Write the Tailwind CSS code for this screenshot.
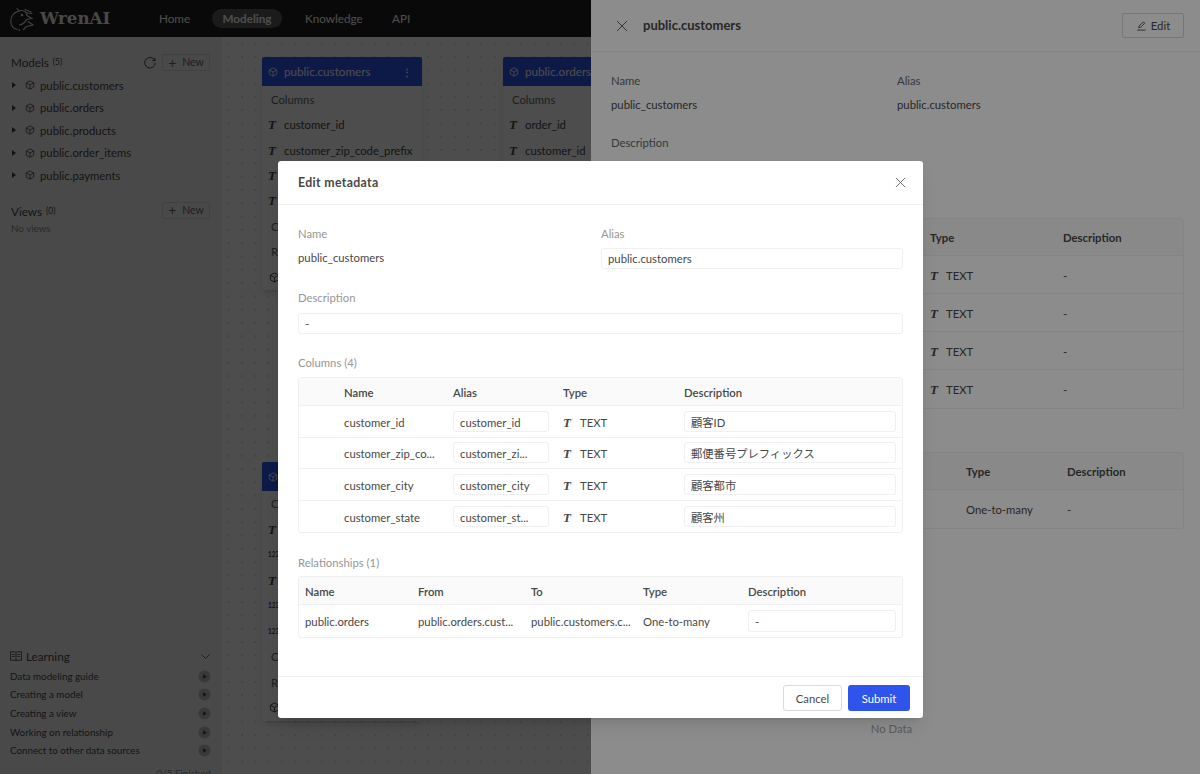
<!DOCTYPE html>
<html lang="en">
<head>
    <meta charset="UTF-8">
    <title>WrenAI - Modeling</title>
    <script src="https://cdn.jsdelivr.net/npm/@tailwindcss/browser@4"></script>
</head>
<body class="w-[1200px] h-[774px] overflow-hidden relative bg-white text-[11.3px] leading-[19px] text-[#484848] [font-family:'Lato','Noto_Sans_CJK_JP',sans-serif]">
    <svg class="hidden">
        <symbol id="cube" viewBox="0 0 24 24"><path d="M12 2 21 7v10l-9 5-9-5V7zM3 7l9 5 9-5M12 12v10" fill="none" stroke="currentColor" stroke-width="2" stroke-linejoin="round"/></symbol>
        <symbol id="close" viewBox="0 0 12 12"><path d="M1 1l10 10M11 1 1 11" stroke="currentColor" stroke-width="1" fill="none"/></symbol>
        <symbol id="play" viewBox="0 0 14 14"><circle cx="7" cy="7" r="6.5" fill="#bfbfbf"/><path d="M5.5 4.500 9.500 7l-4 2.500z" fill="#434343"/></symbol>
    </svg>

    <!-- app under the masks -->
    <div class="flex flex-col h-full">
        <header class="h-[37px] shrink-0 bg-[#1f1f1f] flex items-center text-white">
            <svg class="w-[24px] h-[24px] ml-[10px] text-[#e0e0e0]" viewBox="0 0 24 24" fill="none" stroke="currentColor" stroke-width="1.1" stroke-linecap="round"><path d="M7 1.5 9 4C4 5.500 .8 9 .8 14c0 4 2.500 7.500 6.200 8.500"/><path d="M9 4c2.500-.8 5-.5 6.500 1 1 1 1 2.500 1.500 3.500l5 3-5.500 1c-1.500 3-4 5-7 5.500"/><path d="M15 2.500 21 5M17 6l5 .5M18 14.500l5 3.500-6.500 1.500-3 3M9 22.500l.5 1.300"/><circle cx="12" cy="8" r=".7" fill="currentColor"/></svg>
            <span class="ml-[6px] w-[119px] [font-family:'DejaVu_Serif',serif] font-bold text-[16.700px] text-[#f0f0f0]">WrenAI</span>
            <span class="w-[53px] text-[11.7px]">Home</span>
            <span class="w-[70px] h-[19px] rounded-full bg-[#5c5c5c] flex items-center justify-center font-bold text-[11.7px]">Modeling</span>
            <span class="ml-[23px] w-[87px] text-[11.7px]">Knowledge</span>
            <span class="text-[11.7px]">API</span>
        </header>
        <div class="flex flex-1 min-h-0">
            <aside class="w-[222px] shrink-0 bg-[#f5f5f5] flex flex-col overflow-hidden">
                <div class="h-[17px] mt-[17px] ml-[11px] mr-[12px] flex items-center">
                    <span class="text-[11.7px]">Models</span><span class="text-[8.5px] ml-[4px]">(5)</span>
                    <svg class="w-[12px] h-[12px] ml-auto mr-[6px]" viewBox="0 0 12 12" fill="none" stroke="currentColor"><path d="M10.800 3.500A5.300 5.300 0 1 0 11.300 6M11 1v2.700H8.300"/></svg>
                    <span class="w-[48px] h-[17px] border border-[#d9d9d9] rounded-[2px] flex items-center justify-center gap-[6px] text-[10.5px] text-[#65676c]"><b class="font-normal text-[14px] leading-none">+</b>New</span>
                </div>
                <div class="mt-[3px]">
                    <div class="h-[22.5px] flex items-center pl-[12px]"><span class="w-0 h-0 border-y-[3.500px] border-y-transparent border-l-[4px] border-l-[#434343]"></span><svg class="w-[10px] h-[10px] ml-[9px]"><use href="#cube"/></svg><span class="ml-[5px]">public.customers</span></div>
                    <div class="h-[22.5px] flex items-center pl-[12px]"><span class="w-0 h-0 border-y-[3.500px] border-y-transparent border-l-[4px] border-l-[#434343]"></span><svg class="w-[10px] h-[10px] ml-[9px]"><use href="#cube"/></svg><span class="ml-[5px]">public.orders</span></div>
                    <div class="h-[22.5px] flex items-center pl-[12px]"><span class="w-0 h-0 border-y-[3.500px] border-y-transparent border-l-[4px] border-l-[#434343]"></span><svg class="w-[10px] h-[10px] ml-[9px]"><use href="#cube"/></svg><span class="ml-[5px]">public.products</span></div>
                    <div class="h-[22.5px] flex items-center pl-[12px]"><span class="w-0 h-0 border-y-[3.500px] border-y-transparent border-l-[4px] border-l-[#434343]"></span><svg class="w-[10px] h-[10px] ml-[9px]"><use href="#cube"/></svg><span class="ml-[5px]">public.order_items</span></div>
                    <div class="h-[22.5px] flex items-center pl-[12px]"><span class="w-0 h-0 border-y-[3.500px] border-y-transparent border-l-[4px] border-l-[#434343]"></span><svg class="w-[10px] h-[10px] ml-[9px]"><use href="#cube"/></svg><span class="ml-[5px]">public.payments</span></div>
                </div>
                <div class="h-[17px] mt-[15px] ml-[11px] mr-[12px] flex items-center">
                    <span class="text-[11.7px] pt-[3px]">Views</span><span class="text-[8.5px] ml-[4px] pt-[3px]">(0)</span>
                    <span class="ml-auto w-[48px] h-[17px] border border-[#d9d9d9] rounded-[2px] flex items-center justify-center gap-[6px] text-[10.5px] text-[#65676c]"><b class="font-normal text-[14px] leading-none">+</b>New</span>
                </div>
                <div class="ml-[11px] text-[9.8px] text-[#8c8c8c]">No views</div>

                <div class="mt-auto h-[132px] shrink-0 border-t border-[#ececec] overflow-hidden pl-[10px] pr-[11px] text-[9.8px]">
                    <div class="h-[26px] flex items-center text-[11.7px]">
                        <svg class="w-[12px] h-[10px] mr-[4px]" viewBox="0 0 12 10" fill="none" stroke="currentColor" stroke-width=".9"><path d="M.5.800h4.500L6 1.500 7 .8h4.500v8.400H7L6 9.500 5 9.200H.5zM6 1.500v8M2 3.500h2.500M2 5.500h2.500M7.500 3.500H10M7.500 5.500H10"/></svg>
                        Learning
                        <svg class="w-[9px] h-[5px] ml-auto mr-[1px]" viewBox="0 0 9 5" fill="none" stroke="currentColor" stroke-width=".8"><path d="M.5.500l4 4 4-4"/></svg>
                    </div>
                    <div class="h-[18.6px] flex items-center justify-between mt-[-2px]">Data modeling guide<svg class="w-[13px] h-[13px]"><use href="#play"/></svg></div>
                    <div class="h-[18.6px] flex items-center justify-between">Creating a model<svg class="w-[13px] h-[13px]"><use href="#play"/></svg></div>
                    <div class="h-[18.6px] flex items-center justify-between">Creating a view<svg class="w-[13px] h-[13px]"><use href="#play"/></svg></div>
                    <div class="h-[18.6px] flex items-center justify-between">Working on relationship<svg class="w-[13px] h-[13px]"><use href="#play"/></svg></div>
                    <div class="h-[18.6px] flex items-center justify-between">Connect to other data sources<svg class="w-[13px] h-[13px]"><use href="#play"/></svg></div>
                    <div class="mt-[4px] text-right text-[#8c8c8c]">0/5 Finished</div>
                </div>
            </aside>

            <!-- diagram canvas -->
            <main class="relative flex-1 bg-white bg-[radial-gradient(#cfcfcf_0.6px,transparent_0.8px)] bg-[length:13.3px_13.3px]">
                <div class="absolute left-[40px] top-[20px] w-[160px] bg-white rounded-[2px] shadow-md whitespace-nowrap">
                    <div class="h-[29px] bg-[#2f54eb] rounded-t-[2px] text-white flex items-center pl-[6px] pr-[10px] text-[11.7px]"><svg class="w-[10px] h-[10px] mr-[6px]"><use href="#cube"/></svg>public.customers<span class="ml-auto leading-none font-bold text-[10px]">⋮</span></div>
                    <div class="h-[25.5px] flex items-center px-[9px] pt-[2px] text-[#65676c]">Columns</div>
                    <div class="h-[25.5px] flex items-center px-[6px]"><i class="w-[16px] shrink-0 [font-family:'Liberation_Serif',serif] font-bold text-[13px]">T</i>customer_id</div>
                    <div class="h-[25.5px] flex items-center px-[6px] pt-[1px]"><i class="w-[16px] shrink-0 [font-family:'Liberation_Serif',serif] font-bold text-[13px]">T</i>customer_zip_code_prefix</div>
                    <div class="h-[25.5px] flex items-center px-[6px]"><i class="w-[16px] shrink-0 [font-family:'Liberation_Serif',serif] font-bold text-[13px]">T</i>customer_city</div>
                    <div class="h-[25.5px] flex items-center px-[6px]"><i class="w-[16px] shrink-0 [font-family:'Liberation_Serif',serif] font-bold text-[13px]">T</i>customer_state</div>
                    <div class="h-[25.5px] flex items-center px-[9px] text-[#65676c]">Calculated Fields</div>
                    <div class="h-[25.5px] flex items-center px-[9px] text-[#65676c]">Relationships</div>
                    <div class="h-[25.5px] flex items-center px-[7px]"><svg class="w-[11px] h-[11px] mr-[4px]"><use href="#cube"/></svg>public.orders</div>
                </div>
                <div class="absolute left-[281px] top-[20px] w-[160px] bg-white rounded-[2px] shadow-md whitespace-nowrap">
                    <div class="h-[29px] bg-[#2f54eb] rounded-t-[2px] text-white flex items-center pl-[6px] pr-[10px] text-[11.7px]"><svg class="w-[10px] h-[10px] mr-[6px]"><use href="#cube"/></svg>public.orders</div>
                    <div class="h-[25.5px] flex items-center px-[9px] pt-[2px] text-[#65676c]">Columns</div>
                    <div class="h-[25.5px] flex items-center px-[6px]"><i class="w-[16px] shrink-0 [font-family:'Liberation_Serif',serif] font-bold text-[13px]">T</i>order_id</div>
                    <div class="h-[25.5px] flex items-center px-[6px] pt-[1px]"><i class="w-[16px] shrink-0 [font-family:'Liberation_Serif',serif] font-bold text-[13px]">T</i>customer_id</div>
                </div>
                <div class="absolute left-[40px] top-[425px] w-[160px] bg-white rounded-[2px] shadow-md whitespace-nowrap">
                    <div class="h-[29px] bg-[#2f54eb] rounded-t-[2px] text-white flex items-center pl-[6px] pr-[10px] text-[11.7px]"><svg class="w-[10px] h-[10px] mr-[6px]"><use href="#cube"/></svg>public.payments</div>
                    <div class="h-[25.5px] flex items-center px-[9px] text-[#65676c]">Columns</div>
                    <div class="h-[25.5px] flex items-center px-[6px]"><i class="w-[16px] shrink-0 [font-family:'Liberation_Serif',serif] font-bold text-[13px]">T</i>order_id</div>
                    <div class="h-[25.5px] flex items-center px-[6px]"><b class="w-[16px] shrink-0 text-[6.500px]">123</b>payment_sequential</div>
                    <div class="h-[25.5px] flex items-center px-[6px]"><i class="w-[16px] shrink-0 [font-family:'Liberation_Serif',serif] font-bold text-[13px]">T</i>payment_type</div>
                    <div class="h-[25.5px] flex items-center px-[6px]"><b class="w-[16px] shrink-0 text-[6.500px]">123</b>payment_installments</div>
                    <div class="h-[25.5px] flex items-center px-[6px]"><b class="w-[16px] shrink-0 text-[6.500px]">123</b>payment_value</div>
                    <div class="h-[25.5px] flex items-center px-[9px] text-[#65676c]">Calculated Fields</div>
                    <div class="h-[25.5px] flex items-center px-[9px] text-[#65676c]">Relationships</div>
                    <div class="h-[25.5px] flex items-center px-[7px]"><svg class="w-[11px] h-[11px] mr-[4px]"><use href="#cube"/></svg>public.orders</div>
                </div>
            </main>
        </div>
    </div>

    <div class="absolute inset-0 bg-black/45"></div>

    <!-- drawer -->
    <section class="absolute right-0 top-0 w-[609px] h-full bg-white">
        <div class="h-[52px] border-b border-[#f0f0f0] flex items-center pl-[25px] pr-[16px]">
            <svg class="w-[12px] h-[12px] text-[#65676c]"><use href="#close"/></svg>
            <span class="ml-[15px] font-bold text-[13px]">public.customers</span>
            <span class="ml-auto w-[62px] h-[25px] border border-[#d9d9d9] rounded-[2px] flex items-center justify-center gap-[4px]">
                <svg class="w-[11px] h-[11px]" viewBox="0 0 12 12" fill="none" stroke="currentColor"><path d="M3 8.500 3.500 6.500 8 2l1.500 1.500L5 8zM1.500 11h9"/></svg>Edit
            </span>
        </div>
        <div class="pl-[20px] pr-[16px] pt-[19px]">
            <div class="grid grid-cols-[286px_1fr]">
                <div class="h-[18px] text-[#65676c]">Name</div><div class="h-[18px] text-[#65676c]">Alias</div>
                <div class="h-[18px] mt-[6px]">public_customers</div><div class="h-[18px] mt-[6px]">public.customers</div>
            </div>
            <div class="h-[18px] mt-[20px] text-[#65676c]">Description</div>
            <div class="h-[18px] mt-[6px]">-</div>
            <div class="h-[18px] mt-[15px] text-[#65676c]">Columns (4)</div>
            <div class="mt-[10px] border border-[#f0f0f0] rounded-[3px]">
                <div class="h-[37px] bg-[#fafafa] grid grid-cols-[155px_156px_133px_1fr] items-center px-[7px] font-bold border-b border-[#f0f0f0]"><span>Name</span><span>Alias</span><span>Type</span><span>Description</span></div>
                <div class="h-[38px] grid grid-cols-[155px_156px_133px_1fr] items-center px-[7px] border-b border-[#f0f0f0] [&>span]:pt-[2px]"><span>customer_id</span><span>customer_id</span><span class="flex items-center"><i class="w-[16px] [font-family:'Liberation_Serif',serif] font-bold text-[13px]">T</i>TEXT</span><span>-</span></div>
                <div class="h-[38px] grid grid-cols-[155px_156px_133px_1fr] items-center px-[7px] border-b border-[#f0f0f0] [&>span]:pt-[2px]"><span>customer_zip_code_prefix</span><span>customer_zip_code_prefix</span><span class="flex items-center"><i class="w-[16px] [font-family:'Liberation_Serif',serif] font-bold text-[13px]">T</i>TEXT</span><span>-</span></div>
                <div class="h-[38px] grid grid-cols-[155px_156px_133px_1fr] items-center px-[7px] border-b border-[#f0f0f0] [&>span]:pt-[2px]"><span>customer_city</span><span>customer_city</span><span class="flex items-center"><i class="w-[16px] [font-family:'Liberation_Serif',serif] font-bold text-[13px]">T</i>TEXT</span><span>-</span></div>
                <div class="h-[38px] grid grid-cols-[155px_156px_133px_1fr] items-center px-[7px]"><span>customer_state</span><span>customer_state</span><span class="flex items-center"><i class="w-[16px] [font-family:'Liberation_Serif',serif] font-bold text-[13px]">T</i>TEXT</span><span>-</span></div>
            </div>
            <div class="h-[18px] mt-[15px] text-[#65676c]">Relationships (1)</div>
            <div class="mt-[10px] border border-[#f0f0f0] rounded-[3px]">
                <div class="h-[37px] bg-[#fafafa] grid grid-cols-[115px_116px_116px_101px_1fr] items-center px-[7px] font-bold border-b border-[#f0f0f0]"><span>Name</span><span>From</span><span>To</span><span>Type</span><span>Description</span></div>
                <div class="h-[38px] grid grid-cols-[115px_116px_116px_101px_1fr] items-center px-[7px]"><span>public.orders</span><span>public.orders.cu...</span><span>public.custo...</span><span>One-to-many</span><span>-</span></div>
            </div>
            <div class="h-[18px] mt-[190px] pr-[12px] text-center text-[#a6a6a6]">No Data</div>
        </div>
    </section>

    <div class="absolute inset-0 bg-black/45"></div>

    <!-- edit metadata modal -->
    <section class="absolute left-[278px] top-[161px] w-[645px] h-[557px] bg-white rounded-[3px] shadow-lg flex flex-col">
        <div class="h-[44px] shrink-0 border-b border-[#f0f0f0] flex items-center pl-[20px] pr-[17px]">
            <span class="font-bold text-[12.3px] tracking-[0.35px]">Edit metadata</span>
            <svg class="ml-auto w-[11px] h-[11px] text-[#65676c]"><use href="#close"/></svg>
        </div>
        <div class="flex-1 px-[20px] pt-[19px]">
            <div class="grid grid-cols-[303px_1fr]">
                <div class="h-[18px] text-[#969696]">Name</div><div class="h-[18px] text-[#969696]">Alias</div>
                <div class="h-[21px] mt-[6px]">public_customers</div>
                <div class="h-[21px] mt-[6px] border border-[#f0f0f0] rounded-[3px] flex items-center px-[6px]">public.customers</div>
            </div>
            <div class="h-[18px] mt-[19px] text-[#969696]">Description</div>
            <div class="h-[21px] mt-[7px] border border-[#f0f0f0] rounded-[3px] flex items-center px-[6px]">-</div>
            <div class="h-[18px] mt-[19px] text-[#969696]">Columns (4)</div>
            <div class="mt-[6px] border border-[#f0f0f0] rounded-[3px]">
                <div class="h-[28px] bg-[#fafafa] grid grid-cols-[45px_109px_110px_121px_1fr] items-center pr-[6px] font-semibold border-b border-[#f0f0f0] [&>span]:pt-[2px]"><span></span><span>Name</span><span>Alias</span><span>Type</span><span>Description</span></div>
                <div class="h-[31.5px] grid grid-cols-[45px_109px_110px_121px_1fr] items-center pr-[6px] border-b border-[#f0f0f0] [&>span]:pt-[2px]"><span></span><span>customer_id</span><span class="w-[96px] h-[21px] border border-[#f0f0f0] rounded-[3px] flex items-center px-[6px]">customer_id</span><span class="flex items-center"><i class="w-[17px] [font-family:'Liberation_Serif',serif] font-bold text-[13px]">T</i>TEXT</span><span class="h-[21px] border border-[#f0f0f0] rounded-[3px] flex items-center px-[6px]">顧客ID</span></div>
                <div class="h-[31.5px] grid grid-cols-[45px_109px_110px_121px_1fr] items-center pr-[6px] border-b border-[#f0f0f0] [&>span]:pt-[2px]"><span></span><span>customer_zip_co...</span><span class="w-[96px] h-[21px] border border-[#f0f0f0] rounded-[3px] flex items-center px-[6px]">customer_zi...</span><span class="flex items-center"><i class="w-[17px] [font-family:'Liberation_Serif',serif] font-bold text-[13px]">T</i>TEXT</span><span class="h-[21px] border border-[#f0f0f0] rounded-[3px] flex items-center px-[6px]">郵便番号プレフィックス</span></div>
                <div class="h-[31.5px] grid grid-cols-[45px_109px_110px_121px_1fr] items-center pr-[6px] border-b border-[#f0f0f0] [&>span]:pt-[2px]"><span></span><span>customer_city</span><span class="w-[96px] h-[21px] border border-[#f0f0f0] rounded-[3px] flex items-center px-[6px]">customer_city</span><span class="flex items-center"><i class="w-[17px] [font-family:'Liberation_Serif',serif] font-bold text-[13px]">T</i>TEXT</span><span class="h-[21px] border border-[#f0f0f0] rounded-[3px] flex items-center px-[6px]">顧客都市</span></div>
                <div class="h-[31.5px] grid grid-cols-[45px_109px_110px_121px_1fr] items-center pr-[6px] [&>span]:pt-[2px]"><span></span><span>customer_state</span><span class="w-[96px] h-[21px] border border-[#f0f0f0] rounded-[3px] flex items-center px-[6px]">customer_st...</span><span class="flex items-center"><i class="w-[17px] [font-family:'Liberation_Serif',serif] font-bold text-[13px]">T</i>TEXT</span><span class="h-[21px] border border-[#f0f0f0] rounded-[3px] flex items-center px-[6px]">顧客州</span></div>
            </div>
            <div class="h-[18px] mt-[20px] text-[#969696]">Relationships (1)</div>
            <div class="mt-[5px] border border-[#f0f0f0] rounded-[3px]">
                <div class="h-[28px] bg-[#fafafa] grid grid-cols-[113px_113px_112px_105px_1fr] items-center pl-[6px] pr-[6px] font-semibold border-b border-[#f0f0f0] [&>span]:pt-[2px]"><span>Name</span><span>From</span><span>To</span><span>Type</span><span>Description</span></div>
                <div class="h-[32px] grid grid-cols-[113px_113px_112px_105px_1fr] items-center pl-[6px] pr-[6px]"><span>public.orders</span><span>public.orders.cust...</span><span>public.customers.c...</span><span>One-to-many</span><span class="h-[22px] border border-[#f0f0f0] rounded-[3px] flex items-center px-[6px]">-</span></div>
            </div>
        </div>
        <div class="h-[42px] shrink-0 border-t border-[#f0f0f0] flex justify-end gap-[6px] pt-[8px] pr-[13px]">
            <button class="w-[59px] h-[26px] border border-[#d9d9d9] rounded-[3px] bg-white">Cancel</button>
            <button class="w-[62px] h-[26px] rounded-[3px] bg-[#2f54eb] text-white">Submit</button>
        </div>
    </section>
</body>
</html>
